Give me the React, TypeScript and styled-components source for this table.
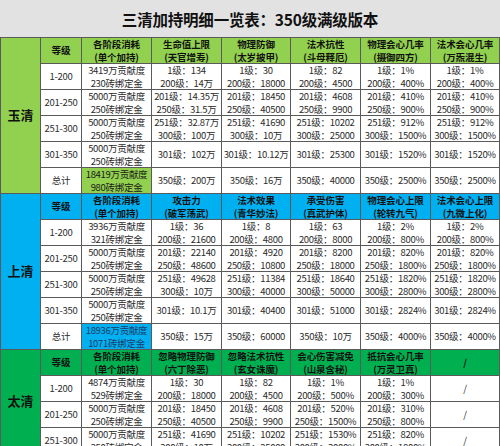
import React from 'react';
import styled, { createGlobalStyle } from 'styled-components';

const colors = {
  yuqing: '#92d050',
  shangqing: '#00b0f0',
  taiqing: '#00b050',
  line: '#5a5a5a',
  titleBg: '#e2e2e2',
  text: '#2b2b2b',
};

const cost = (a: string, b: string) => [`${a}万贡献度`, `${b}砖绑定金`];
const std = ['5000万贡献度', '250砖绑定金'];

interface Section {
  name: string;
  bg: string;
  totalColor: string;
  heads: string[][];
  rows: { level: string; cost: string[]; values: string[][]; total?: boolean }[];
}

const sections: Section[] = [
  {
    name: '玉清',
    bg: colors.yuqing,
    totalColor: '#1a1a1a',
    heads: [
      ['生命值上限', '(天官增寿)'],
      ['物理防御', '(太岁披甲)'],
      ['法术抗性', '(斗母释厄)'],
      ['物理会心几率', '(摄御四方)'],
      ['法术会心几率', '(万炁混生)'],
    ],
    rows: [
      {
        level: '1-200',
        cost: cost('3419', '230'),
        values: [
          ['1级：134', '200级：14万'],
          ['1级：30', '200级：18000'],
          ['1级：82', '200级：4500'],
          ['1级：1%', '200级：400%'],
          ['1级：1%', '200级：400%'],
        ],
      },
      {
        level: '201-250',
        cost: std,
        values: [
          ['201级：14.35万', '250级：31.5万'],
          ['201级：18450', '250级：40500'],
          ['201级：4608', '250级：9900'],
          ['201级：410%', '250级：900%'],
          ['201级：410%', '250级：900%'],
        ],
      },
      {
        level: '251-300',
        cost: std,
        values: [
          ['251级：32.87万', '300级：100万'],
          ['251级：41690', '300级：10万'],
          ['251级：10202', '300级：25000'],
          ['251级：912%', '300级：1500%'],
          ['251级：912%', '300级：1500%'],
        ],
      },
      {
        level: '301-350',
        cost: std,
        values: [['301级：102万'], ['301级：10.12万'], ['301级：25300'], ['301级：1520%'], ['301级：1520%']],
      },
      {
        level: '总计',
        cost: cost('18419', '980'),
        total: true,
        values: [['350级：200万'], ['350级：16万'], ['350级：40000'], ['350级：2500%'], ['350级：2500%']],
      },
    ],
  },
  {
    name: '上清',
    bg: colors.shangqing,
    totalColor: '#1f3a68',
    heads: [
      ['攻击力', '(破军荡武)'],
      ['法术效果', '(青华妙法)'],
      ['承受伤害', '(真武护体)'],
      ['物理会心上限', '(轮转九气)'],
      ['法术会心上限', '(九微上化)'],
    ],
    rows: [
      {
        level: '1-200',
        cost: cost('3936', '321'),
        values: [
          ['1级：36', '200级：21600'],
          ['1级：8', '200级：4800'],
          ['1级：63', '200级：8000'],
          ['1级：2%', '200级：800%'],
          ['1级：2%', '200级：800%'],
        ],
      },
      {
        level: '201-250',
        cost: std,
        values: [
          ['201级：22140', '250级：48600'],
          ['201级：4920', '250级：10800'],
          ['201级：8200', '250级：18000'],
          ['201级：820%', '250级：1800%'],
          ['201级：820%', '250级：1800%'],
        ],
      },
      {
        level: '251-300',
        cost: std,
        values: [
          ['251级：49628', '300级：10万'],
          ['251级：11384', '300级：40000'],
          ['251级：18640', '300级：50000'],
          ['251级：1820%', '300级：2800%'],
          ['251级：1820%', '300级：2800%'],
        ],
      },
      {
        level: '301-350',
        cost: std,
        values: [['301级：10.1万'], ['301级：40400'], ['301级：51000'], ['301级：2824%'], ['301级：2824%']],
      },
      {
        level: '总计',
        cost: cost('18936', '1071'),
        total: true,
        values: [['350级：15万'], ['350级：60000'], ['350级：10万'], ['350级：4000%'], ['350级：4000%']],
      },
    ],
  },
  {
    name: '太清',
    bg: colors.taiqing,
    totalColor: '#1a1a1a',
    heads: [
      ['忽略物理防御', '(六丁除恶)'],
      ['忽略法术抗性', '(玄女诛魔)'],
      ['会心伤害减免', '(山泉含秘)'],
      ['抵抗会心几率', '(万灵卫真)'],
      ['/'],
    ],
    rows: [
      {
        level: '1-200',
        cost: cost('4874', '529'),
        values: [
          ['1级：30', '200级：18000'],
          ['1级：82', '200级：4500'],
          ['1级：1%', '200级：500%'],
          ['1级：1%', '200级：300%'],
          ['/'],
        ],
      },
      {
        level: '201-250',
        cost: std,
        values: [
          ['201级：18450', '250级：40500'],
          ['201级：4608', '250级：9900'],
          ['201级：520%', '250级：1500%'],
          ['201级：310%', '250级：800%'],
          ['/'],
        ],
      },
      {
        level: '251-300',
        cost: std,
        values: [
          ['251级：41690', '300级：10万'],
          ['251级：10202', '300级：25000'],
          ['251级：1530%', '300级：3000%'],
          ['251级：820%', '300级：1800%'],
          ['/'],
        ],
      },
    ],
  },
];

const widths = [40, 41, 70, 70, 69, 70, 70, 69];

export default function App() {
  return (
    <Page>
      <GlobalStyle />
      <TitleBar>三清加持明细一览表：350级满级版本</TitleBar>
      <Sheet>
        <colgroup>
          {widths.map((w, i) => (
            <col key={i} style={{ width: w }} />
          ))}
        </colgroup>
        <tbody>
          {sections.map((section) => (
            <SectionRows key={section.name} section={section} />
          ))}
        </tbody>
      </Sheet>
    </Page>
  );
}

function Lines({ lines }: { lines: string[] }) {
  return (
    <>
      {lines.map((line, i) => (
        <Line key={i}>{line}</Line>
      ))}
    </>
  );
}

function SectionRows({ section }: { section: Section }) {
  const heads = [['等级'], ['各阶段消耗', '(单个加持)'], ...section.heads];
  return (
    <>
      <Row>
        <NameCell rowSpan={section.rows.length + 1} $bg={section.bg}>
          {section.name}
        </NameCell>
        {heads.map((head, i) => (
          <HeadCell key={i} $bg={section.bg}>
            <Lines lines={head} />
          </HeadCell>
        ))}
      </Row>
      {section.rows.map((row) => (
        <Row key={row.level}>
          <Cell>{row.level}</Cell>
          <Cell
            $bg={row.total ? section.bg : undefined}
            $color={row.total ? section.totalColor : undefined}
          >
            <Lines lines={row.cost} />
          </Cell>
          {row.values.map((value, i) => (
            <Cell key={i}>
              <Lines lines={value} />
            </Cell>
          ))}
        </Row>
      ))}
    </>
  );
}

const GlobalStyle = createGlobalStyle`
  html, body {
    margin: 0;
    padding: 0;
    background: #ffffff;
    overflow: hidden;
  }
  body {
    font-family: "Noto Sans CJK SC", "Liberation Sans", sans-serif;
  }
`;

const Page = styled.div`
  width: 500px;
  height: 446px;
  overflow: hidden;
  background: #ffffff;
`;

const TitleBar = styled.div`
  height: 37px;
  display: flex;
  align-items: center;
  justify-content: center;
  background: ${colors.titleBg};
  font-size: 15.5px;
  font-weight: 700;
  color: #111;
  letter-spacing: -0.2px;
`;

const Sheet = styled.table`
  width: 499px;
  table-layout: fixed;
  border-collapse: collapse;
`;

const Row = styled.tr`
  height: 26px;
`;

const Cell = styled.td<{ $bg?: string; $color?: string }>`
  padding: 0;
  height: 25px;
  border: 1px solid ${colors.line};
  background: ${({ $bg }) => $bg || '#ffffff'};
  color: ${({ $color }) => $color || colors.text};
  text-align: center;
  vertical-align: middle;
  font-size: 9.5px;
  line-height: 12.5px;
  letter-spacing: -0.3px;
  white-space: nowrap;
  overflow: hidden;
`;

const HeadCell = styled(Cell)`
  color: #111;
  font-weight: 700;
  font-size: 9.5px;
  letter-spacing: -0.1px;
`;

const NameCell = styled(Cell)`
  color: #111;
  font-weight: 700;
  font-size: 13px;
  letter-spacing: 0;
`;

const Line = styled.div`
  display: block;
`;
